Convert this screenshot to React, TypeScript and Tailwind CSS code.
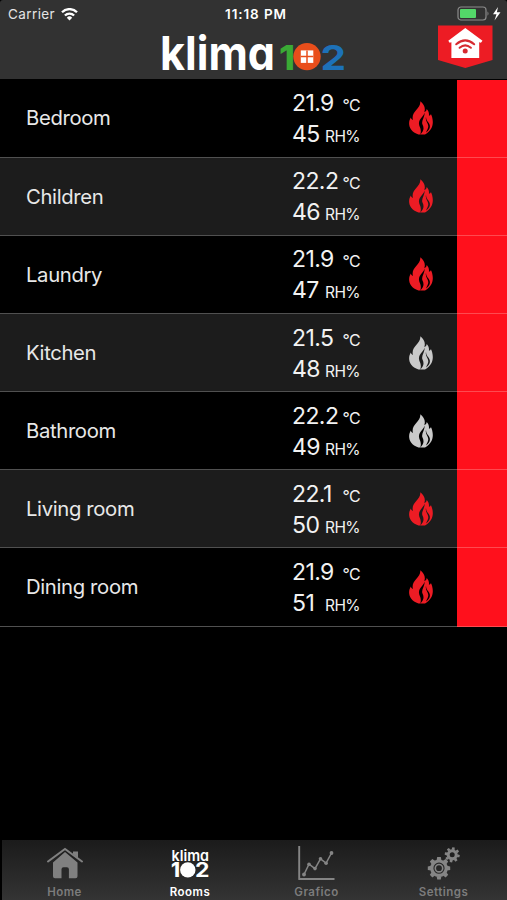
import React from 'react';

const rooms = [
  { name: 'Bedroom', temp: '21.9', humidity: '45', heating: true },
  { name: 'Children', temp: '22.2', humidity: '46', heating: true },
  { name: 'Laundry', temp: '21.9', humidity: '47', heating: true },
  { name: 'Kitchen', temp: '21.5', humidity: '48', heating: false },
  { name: 'Bathroom', temp: '22.2', humidity: '49', heating: false },
  { name: 'Living room', temp: '22.1', humidity: '50', heating: true },
  { name: 'Dining room', temp: '21.9', humidity: '51', heating: true },
];

function WifiIcon() {
  return <svg className="ml-[6px] h-[13px] w-[17px]" viewBox="0 0 17 13" fill="none" stroke="#fff" strokeWidth="2.3">
      <path d="M1 4.2a10.6 10.6 0 0 1 15 0" />
      <path d="M3.9 7.5a6.5 6.5 0 0 1 9.2 0" />
      <path d="M8.5 12.5 5.8 9.7a3.8 3.8 0 0 1 5.4 0z" fill="#fff" stroke="none" />
    </svg>;
}

function Battery() {
  return <svg className="h-[16px] w-[46px]" viewBox="0 0 46 16">
      <rect x="1" y="1" width="28" height="13" rx="3" fill="none" stroke="#8b8b8b" strokeWidth="1.2" />
      <rect x="3" y="3" width="16" height="9" rx="1" fill="#53d769" />
      <path d="M30.5 5.3v4.5q2-2.2 0-4.5z" fill="#8b8b8b" />
      <path d="M41 1 36 8.2h3.5L37.5 14.5l6-8.3h-3.6z" fill="#fff" />
    </svg>;
}

function HomeBadge() {
  return <svg className="h-[43px] w-[55px]" viewBox="0 0 55 43">
      <path d="M0 .5h54.5V35L27.3 43 0 35z" fill="#ed1c24" />
      <path d="m27.3 3 17.2 12.7-1.6 2-1.7-.5V33H13.4V17.2l-1.8.5-1.3-2z" fill="#fff" />
      <g fill="none" stroke="#d62a30" strokeWidth="2" strokeLinecap="round">
        <path d="M18.2 19.3q9-7.8 18 0" />
        <path d="M21.6 22.8q5.6-4.8 11.3 0" />
      </g>
      <circle cx="27.2" cy="26.1" r="2.5" fill="#d62a30" />
    </svg>;
}

function Logo() {
  return <svg className="h-[51px] w-[190px] overflow-visible [font-feature-settings:'cv11']" viewBox="0 0 190 51" fontFamily="Inter, sans-serif" fontWeight="700">
      <text x="-2" y="41.5" fontSize="47" fill="#fff" textLength="115" lengthAdjust="spacingAndGlyphs">klima</text>
      <text x="117" y="41.5" fontSize="34.5" fontWeight="800" fill="#3aaa35" textLength="16" lengthAdjust="spacingAndGlyphs">1</text>
      <circle cx="145" cy="28.6" r="13.7" fill="#e94e1b" />
      <rect x="138.8" y="22.4" width="12.5" height="12.5" fill="#fff" />
      <path d="M145 22.4v12.5M138.8 28.6h12.5" stroke="#e94e1b" strokeWidth="1.5" />
      <text x="158.5" y="41.5" fontSize="34.5" fill="#1d71b8" textLength="25.5" lengthAdjust="spacingAndGlyphs">2</text>
    </svg>;
}

function Flame({ on }: { on: boolean }) {
  return <svg className="h-[34px] w-[24px]" viewBox="0 0 24 34" fill={on ? '#ed1c24' : '#c9c9c9'}>
      <path
        fillRule="evenodd"
        d="M11.3.3C15 3.5 16.8 7 15.3 11 17 10.5 17.5 9.5 17.7 8c1.8 2 2.6 4.2 2.2 6.8 1-.2 1.7-.9 2-1.8C24.8 19 25.5 28.500 16 33.500H9.500C-.5 30-1.500 22 1.800 16.500 2 17.700 2.800 18.600 4 19 1.500 10.500 12 8 11.300.3zM15.800 11.500C14.500 15.500 9.500 18 10 23c.2 3 3 5 1.300 10.500 4.200-4 3.500-7.500 2.200-10C12 20 15.500 17 15.800 11.500zM17 16c-1 4 2 5.500 2.300 9 .1 2.500-1.300 3.500-2.300 6.500 3.500-2.500 4.300-4.700 3.700-7.500C20 21 17 20 17 16z"
      />
    </svg>;
}

function HomeIcon() {
  return <svg className="h-[36px] w-[40px]" viewBox="0 0 40 36" fill="#808080">
      <path d="M8 18.5 20 8l12.5 10.5v13.8q0 2-2 2h-6.6v-9q0-2-2-2h-3.4q-2 0-2 2v9H10q-2 0-2-2z" />
      <path d="M3 17.5 20 5l17 12.500" fill="none" stroke="#808080" strokeWidth="2.1" strokeLinecap="round" />
      <path d="M28 7.5h5V14l-5-4z" />
    </svg>;
}

function RoomsIcon() {
  return <svg className="h-[36px] w-[40px] overflow-visible [font-feature-settings:'cv11']" viewBox="0 0 40 36" fill="#fff" fontFamily="Inter, sans-serif" fontWeight="700">
      <text x="1.5" y="16.5" fontSize="15" fontWeight="600" textLength="37.5" lengthAdjust="spacingAndGlyphs">klima</text>
      <text x="1" y="33" fontSize="19.5" fontWeight="800" textLength="9" lengthAdjust="spacingAndGlyphs">1</text>
      <circle cx="17.8" cy="25.9" r="7.7" />
      <text x="25" y="33" fontSize="19.5" textLength="14.5" lengthAdjust="spacingAndGlyphs">2</text>
    </svg>;
}

function ChartIcon() {
  return <svg className="h-[36px] w-[40px]" viewBox="0 0 40 36" fill="none" stroke="#858585">
      <path d="M2.2 2v33.8M1.500 35h36" strokeWidth="1.9" />
      <path d="m7 30.5 5-10.3 6 4.4 5.5-9.8 5.600 4.400L34.500 9" strokeWidth="1.5" />
      <g fill="#858585" stroke="none">
        <circle cx="7" cy="30.5" r="1.9" />
        <circle cx="12" cy="20.2" r="1.8" />
        <circle cx="18" cy="24.6" r="1.8" />
        <circle cx="23.5" cy="14.8" r="1.8" />
        <circle cx="29.1" cy="19.2" r="1.8" />
        <circle cx="34.5" cy="9" r="1.9" />
      </g>
    </svg>;
}

function GearsIcon() {
  const teeth = [0, 45, 90, 135, 180, 225, 270, 315];
  return <svg className="h-[36px] w-[40px]" viewBox="0 0 40 36" fill="#858585">
      <g transform="translate(15 24.2)">
        <circle r="7.2" fill="none" stroke="#858585" strokeWidth="3.2" />
        <circle r="3.7" fill="none" stroke="#858585" strokeWidth="1.6" />
        {teeth.map(t => <path key={t} d="m-2.4-8 .6-3.2h3.6l.6 3.2z" transform={`rotate(${t})`} />)}
      </g>
      <g transform="translate(28.2 10.8)">
        <circle r="4" fill="none" stroke="#858585" strokeWidth="3" />
        {teeth.map(t => <path key={t} d="m-1.5-5 .3-2.5h2.4l.3 2.5z" transform={`rotate(${t + 10})`} />)}
      </g>
    </svg>;
}

const tabs = [
  { label: 'Home', icon: <HomeIcon />, active: false },
  { label: 'Rooms', icon: <RoomsIcon />, active: true },
  { label: 'Grafico', icon: <ChartIcon />, active: false },
  { label: 'Settings', icon: <GearsIcon />, active: false },
];

function Header() {
  return <header className="relative h-[79px] shrink-0 rounded-t-[3px] bg-[#323232]">
      <div className="grid h-[28px] grid-cols-3 items-center text-[13.5px] text-white">
        <div className="flex items-center pl-[8px]">
          <span className="tracking-[0.4px] text-[#e4e4e4]">Carrier</span>
          <WifiIcon />
        </div>
        <span className="pl-[5px] text-center font-semibold tracking-[0.9px]">11:18 PM</span>
        <div className="flex justify-end pr-[4px]">
          <Battery />
        </div>
      </div>
      <div className="flex pl-[162px]">
        <Logo />
      </div>
      <div className="absolute top-[25px] right-[14px]">
        <HomeBadge />
      </div>
    </header>;
}

function RoomRow({ room, shaded }: { room: typeof rooms[number]; shaded: boolean }) {
  return <li className={`flex h-[78.17px] ${shaded ? 'bg-[#1c1c1c]' : 'bg-black'}`}>
      <div className="flex flex-1 items-center border-b border-[#505050] pl-[26px]">
        <span className="w-[266px] pt-[1px] text-[20.3px] tracking-[-0.35px] text-[#e8e8e8]">{room.name}</span>
        <div className="w-[117px] pt-[2px] text-[23px] leading-[31px] tracking-[-0.6px] text-[#f2f2f2]">
          <div className="flex h-[31px] w-[68px] items-baseline justify-between">
            {room.temp} <span className="text-[16px] leading-none">°C</span>
          </div>
          <div className="flex h-[31px] w-[68px] items-baseline justify-between">
            {room.humidity} <span className="text-[15.5px] leading-none">RH%</span>
          </div>
        </div>
        <Flame on={room.heating} />
      </div>
      <div className="w-[50.5px] border-b border-[#ff4a50] bg-[#ff101c]" />
    </li>;
}

export default function App() {
  return <div className="flex h-[900px] w-[507px] flex-col overflow-hidden bg-black font-['Inter',sans-serif]">
      <Header />
      <ul className="flex-1 pt-[0.5px]">
        {rooms.map((room, i) => <RoomRow key={room.name} room={room} shaded={i % 2 === 1} />)}
      </ul>
      <nav className="ml-[2px] grid h-[60px] grid-cols-[125px_126px_127px_127px] bg-linear-to-b from-[#1b1b1b] to-[#343434]">
        {tabs.map(tab => <div key={tab.label} className="flex flex-col items-center pt-[4px]">
            {tab.icon}
            <span className={`mt-[5px] text-[11.5px] leading-[14px] font-semibold tracking-[0.5px] ${tab.active ? 'text-white' : 'text-[#7c7c7c]'}`}>{tab.label}</span>
          </div>)}
      </nav>
    </div>;
}
